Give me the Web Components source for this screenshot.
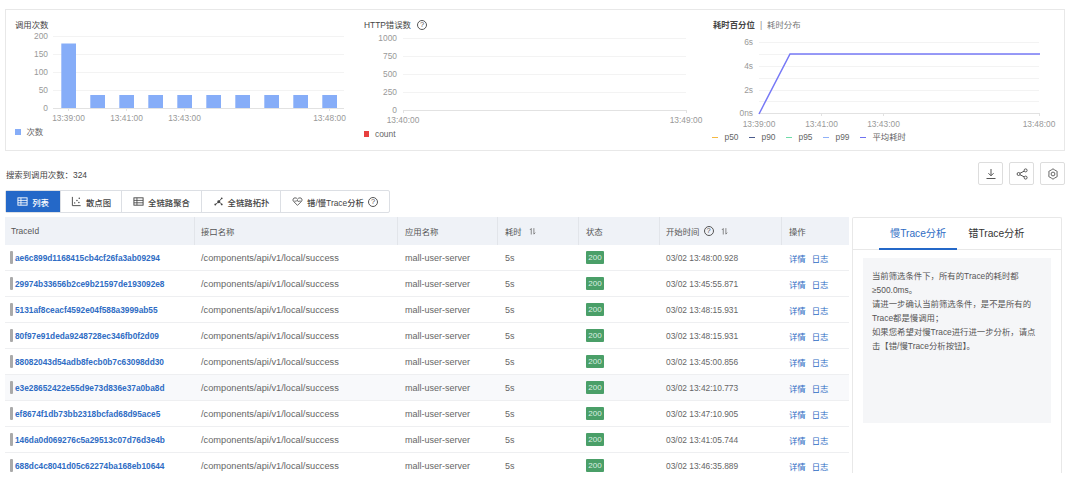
<!DOCTYPE html>
<html lang="zh">
<head>
<meta charset="utf-8">
<title>Trace</title>
<style>
  html, body { margin: 0; height: 483px; overflow: hidden; background: #fff; }
  body { font-family: "Liberation Sans", "Noto Sans CJK SC", sans-serif; font-size: 8.4px; color: #555; }
</style>
</head>
<body>
<trace-page></trace-page>

<script>
const ICONS = {
  table: `<rect x="1" y="2" width="10" height="8" fill="none" stroke="currentColor"/><path d="M1 4.8h10M1 7.4h10M4.3 2v8" stroke="currentColor" fill="none" stroke-width=".9"/>`,
  scatter: `<path d="M1.5 1v9.5h9" stroke="currentColor" fill="none"/><circle cx="4" cy="7.5" r=".8" fill="currentColor"/><circle cx="6.5" cy="5" r=".8" fill="currentColor"/><circle cx="9" cy="2.5" r=".8" fill="currentColor"/><circle cx="8.6" cy="7" r=".8" fill="currentColor"/>`,
  topo: `<path d="M2.5 9.5 6.5 6 9.5 2.5M6.5 6 9.5 9" stroke="currentColor" fill="none"/><circle cx="6.3" cy="6.2" r="1.6" fill="currentColor"/><circle cx="2.5" cy="9.3" r="1" fill="currentColor"/><circle cx="9.5" cy="2.5" r="1" fill="currentColor"/><circle cx="9.5" cy="9.2" r="1" fill="currentColor"/>`,
  heart: `<path d="M6 10.2 1.6 5.8C.4 4.4 1.2 2 3.3 2 4.6 2 5.4 2.7 6 3.5 6.6 2.7 7.4 2 8.7 2c2.1 0 2.9 2.4 1.7 3.8Z" fill="none" stroke="currentColor" stroke-width=".9"/><path d="M2.5 5.6h2.4l1-1.2 1 2 .8-.8h2" fill="none" stroke="currentColor" stroke-width=".8"/>`,
  download: `<path d="M6 1v6.6M3.4 5.2 6 7.8l2.6-2.6M1.5 10.5h9" fill="none" stroke="currentColor"/>`,
  share: `<circle cx="2.6" cy="6" r="1.5" fill="none" stroke="currentColor"/><circle cx="9.6" cy="2.4" r="1.5" fill="none" stroke="currentColor"/><circle cx="9.6" cy="9.6" r="1.5" fill="none" stroke="currentColor"/><path d="M3.9 5.3 8.3 3.1M3.9 6.7l4.4 2.2" fill="none" stroke="currentColor"/>`,
  gear: `<path d="M6 .8 7.6 1.9 10.2 3.4 10 5 10.2 8.6 7.6 10.1 6 11.2 4.4 10.1 1.8 8.6 2 5 1.8 3.4 4.4 1.9Z" fill="none" stroke="currentColor" stroke-width=".9" stroke-linejoin="round"/><circle cx="6" cy="6" r="1.9" fill="none" stroke="currentColor" stroke-width=".9"/>`,
  sort: `<path d="M3 10V2L1.2 4M6.5 1.5v8l1.8-2" fill="none" stroke="currentColor" stroke-width=".9"/>`
};

class UiIcon extends HTMLElement {
  connectedCallback() {
    const size = this.getAttribute("size") || 11;
    this.attachShadow({ mode: "open" }).innerHTML = `
    <style>:host { display: inline-flex; flex: none; } svg { display: block; }</style>
    <svg width="${size}" height="${size}" viewBox="0 0 12 12">${ICONS[this.getAttribute("name")]}</svg>`;
  }
}

class HelpMark extends HTMLElement {
  constructor() {
    super();
    this.attachShadow({ mode: "open" }).innerHTML = `
    <style>
      :host {
        display: inline-flex;
        flex: none;
        align-items: center;
        justify-content: center;
        box-sizing: border-box;
        width: 10px;
        height: 10px;
        border: 1px solid #555;
        border-radius: 50%;
        font-size: 7.5px;
        font-weight: 400;
        line-height: 1;
        color: #555;
      }
    </style>?`;
  }
}

class ChartPanel extends HTMLElement {
  constructor() {
    super();
    this.attachShadow({ mode: "open" }).innerHTML = `
    <style>
      :host { display: block; min-width: 0; padding-top: 9px; }
      .title {
        display: flex;
        align-items: center;
        height: 12px;
        line-height: 12px;
        color: #444;
        white-space: nowrap;
      }
      svg { display: block; }
      text { font-family: "Liberation Sans", sans-serif; font-size: 8.4px; fill: #999; }
      .legend {
        display: flex;
        height: 12px;
        line-height: 12px;
        color: #666;
        white-space: nowrap;
      }
    </style>
    <div class="title"><slot name="title"></slot></div>
    <div class="plot"></div>
    <div class="legend"><slot name="legend"></slot></div>`;
  }

  // the plot is drawn in page coordinates, viewBox maps them to this panel
  draw(x0, width, height, body) {
    this.shadowRoot.querySelector(".plot").innerHTML =
      `<svg width="${width}" height="${height}" viewBox="${x0} 31 ${width} ${height}">${body}</svg>`;
  }

  axes({ left, right, rows, labels, labelRight, axisY, ticks, tickY }) {
    let out = "";
    rows.forEach(([y, label]) => {
      if (y !== axisY) out += `<path d="M${left} ${y}.5H${right}" stroke="#f3f3f3"/>`;
      if (label) out += `<text x="${labelRight}" y="${y + 3}" text-anchor="end">${label}</text>`;
    });
    out += `<path d="M${left} ${axisY}.5H${right}" stroke="#e2e2e2"/>`;
    ticks.forEach((x) => { out += `<path d="M${x}.5 ${axisY}v3" stroke="#e2e2e2"/>`; });
    labels.forEach(([x, t]) => { out += `<text x="${x}" y="${tickY}" text-anchor="middle">${t}</text>`; });
    return out;
  }
}

class CallsChart extends ChartPanel {
  connectedCallback() {
    let body = this.axes({
      left: 53, right: 344, labelRight: 48, axisY: 108, tickY: 121,
      rows: [[36, "200"], [54, "150"], [72, "100"], [90, "50"], [108, "0"]],
      ticks: [68, 126, 184, 329],
      labels: [[68.5, "13:39:00"], [126.5, "13:41:00"], [184.5, "13:43:00"], [329.5, "13:48:00"]]
    });
    for (let i = 0; i < 10; i++) {
      const y = i === 0 ? 43.5 : 95;
      body = `${body}<rect x="${61.3 + i * 29}" y="${y}" width="14.7" height="${108 - y}" fill="#86adf8"/>`;
    }
    this.draw(6, 349, 95, body);
  }
}

class ErrorsChart extends ChartPanel {
  connectedCallback() {
    this.draw(355, 350, 97, this.axes({
      left: 403, right: 686, labelRight: 397, axisY: 110, tickY: 123,
      rows: [[38, "1000"], [56, "750"], [74, "500"], [92, "250"], [110, "0"]],
      ticks: [403, 686],
      labels: [[403, "13:40:00"], [686, "13:49:00"]]
    }));
  }
}

class LatencyChart extends ChartPanel {
  connectedCallback() {
    const body = this.axes({
      left: 759, right: 1039, labelRight: 753, axisY: 113, tickY: 126.5,
      rows: [[42, "6s"], [54], [66, "4s"], [78], [90, "2s"], [101], [113, "0ns"]],
      ticks: [821, 883, 1039],
      labels: [[759, "13:39:00"], [821.5, "13:41:00"], [883.5, "13:43:00"], [1039, "13:48:00"]]
    }) + `<path d="M759 114 790 54H1040" fill="none" stroke="#7779f6" stroke-width="1.5"/>`;
    this.draw(705, 359, 100, body);
  }
}

class LegendItem extends HTMLElement {
  connectedCallback() {
    const color = this.getAttribute("color");
    const dash = this.hasAttribute("dash");
    this.attachShadow({ mode: "open" }).innerHTML = `
    <style>
      :host { display: inline-flex; flex: none; align-items: center; gap: ${dash ? 7 : 6}px; width: var(--item-width, auto); white-space: nowrap; }
      i { display: block; flex: none; background: ${color}; width: 5.5px; height: ${dash ? 1 : 5.5}px; }
    </style>
    <i></i><slot></slot>`;
  }
}

class ToolButton extends HTMLElement {
  connectedCallback() {
    this.attachShadow({ mode: "open" }).innerHTML = `
    <style>
      :host {
        display: flex;
        align-items: center;
        justify-content: center;
        box-sizing: border-box;
        width: 25px;
        height: 23px;
        border: 1px solid #ddd;
        border-radius: 2px;
        color: #555;
      }
    </style>
    <ui-icon name="${this.getAttribute("icon")}" size="12"></ui-icon>`;
  }
}

class ViewTab extends HTMLElement {
  connectedCallback() {
    const icon = this.getAttribute("icon");
    this.attachShadow({ mode: "open" }).innerHTML = `
    <style>
      :host {
        display: flex;
        align-items: center;
        justify-content: center;
        gap: 4px;
        box-sizing: border-box;
        height: 100%;
        color: #444;
        font-weight: 500;
        border-left: 1px solid #dcdfe4;
        white-space: nowrap;
      }
      :host([active]) { background: #2468c8; color: #fff; border-left: 0; }
      :host([first]) { border-left: 0; }
    </style>
    <ui-icon name="${icon}"></ui-icon><slot></slot>`;
  }
}

class TraceRow extends HTMLElement {
  connectedCallback() {
    this.attachShadow({ mode: "open" }).innerHTML = `
    <style>
      :host {
        display: grid;
        grid-template-columns: 190px 203px 100px 81px 81px 122px 67px;
        align-items: center;
        box-sizing: border-box;
        height: 26px;
        border-bottom: 1px solid #eeeff1;
        color: #666;
        white-space: nowrap;
      }
      :host([hot]) { background: #f8f9fb; }
      .id { display: flex; align-items: center; gap: 2.5px; padding-left: 5px; font-size: 8.3px; font-weight: 700; color: #2e6cc4; }
      .id i { display: block; width: 2.5px; height: 13px; background: #aaa; border-radius: 1px; }
      .path { padding-left: 6px; font-size: 9.25px; }
      .cell { padding-left: 7px; }
      .app { font-size: 9px; }
      .dur { font-size: 9px; }
      .tag {
        display: block;
        width: 18px;
        height: 13px;
        line-height: 13px;
        margin-left: 7px;
        border-radius: 1px;
        background: #4a9f68;
        color: #dcefe2;
        font-size: 8px;
        text-align: center;
      }
      .time { padding-left: 6px; }
      .ops { display: flex; gap: 6px; padding-left: 7px; color: #2e6cc4; }
    </style>
    <div class="id"><i></i>${this.getAttribute("trace")}</div>
    <div class="path">/components/api/v1/local/success</div>
    <div class="cell app">mall-user-server</div>
    <div class="cell dur">5s</div>
    <div><span class="tag">200</span></div>
    <div class="time">${this.getAttribute("time")}</div>
    <div class="ops"><span>详情</span><span>日志</span></div>`;
  }
}

class TraceTable extends HTMLElement {
  connectedCallback() {
    const rows = [
      ["ae6c899d1168415cb4cf26fa3ab09294", "03/02 13:48:00.928"],
      ["29974b33656b2ce9b21597de193092e8", "03/02 13:45:55.871"],
      ["5131af8ceacf4592e04f588a3999ab55", "03/02 13:48:15.931"],
      ["80f97e91deda9248728ec346fb0f2d09", "03/02 13:48:15.931"],
      ["88082043d54adb8fecb0b7c63098dd30", "03/02 13:45:00.856"],
      ["e3e28652422e55d9e73d836e37a0ba8d", "03/02 13:42:10.773"],
      ["ef8674f1db73bb2318bcfad68d95ace5", "03/02 13:47:10.905"],
      ["146da0d069276c5a29513c07d76d3e4b", "03/02 13:41:05.744"],
      ["688dc4c8041d05c62274ba168eb10644", "03/02 13:46:35.889"]
    ];
    this.attachShadow({ mode: "open" }).innerHTML = `
    <style>
      :host { display: block; width: 844px; height: 100%; overflow: hidden; }
      .head {
        display: grid;
        grid-template-columns: 190px 203px 100px 81px 81px 122px 67px;
        height: 28px;
        background: #eff2f7;
        color: #555;
        white-space: nowrap;
      }
      .head div {
        display: flex;
        align-items: center;
        gap: 4px;
        padding-left: 6px;
        border-right: 1px solid #e2e5ea;
      }
      .head div:last-child { border-right: 0; }
      .head ui-icon { margin-left: 3px; }
      .head .wide { padding-left: 7px; }
    </style>
    <div class="head">
      <div>TraceId</div>
      <div>接口名称</div>
      <div class="wide">应用名称</div>
      <div class="wide">耗时<ui-icon name="sort" size="9"></ui-icon></div>
      <div class="wide">状态</div>
      <div>开始时间<help-mark></help-mark><ui-icon name="sort" size="9"></ui-icon></div>
      <div class="wide">操作</div>
    </div>
    ${rows.map((r, i) => `<trace-row trace="${r[0]}" time="${r[1]}"${i === 5 ? " hot" : ""}></trace-row>`).join("")}`;
  }
}

class AnalysisPanel extends HTMLElement {
  connectedCallback() {
    this.attachShadow({ mode: "open" }).innerHTML = `
    <style>
      :host {
        display: block;
        box-sizing: border-box;
        width: 210px;
        height: 100%;
        margin-left: 3px;
        border: 1px solid #e8e8e8;
        border-bottom: 0;
        border-radius: 2px 2px 0 0;
      }
      .tabs {
        display: flex;
        box-sizing: border-box;
        height: 32px;
        padding-left: 26px;
        border-bottom: 1px solid #e8e8e8;
        font-size: 10.2px;
        color: #333;
      }
      .tabs div { padding: 0 11px; line-height: 31px; white-space: nowrap; }
      .tabs .on { height: 32px; box-sizing: border-box; border-bottom: 2px solid #2468c8; color: #2e6cc4; }
      .note {
        box-sizing: border-box;
        height: 165px;
        margin: 8px 10px 0;
        padding: 11px 9px;
        background: #f5f6f8;
        line-height: 14px;
        color: #555;
        white-space: nowrap;
      }
    </style>
    <div class="tabs"><div class="on">慢Trace分析</div><div>错Trace分析</div></div>
    <div class="note">当前筛选条件下，所有的Trace的耗时都<br>≥500.0ms。<br>请进一步确认当前筛选条件，是不是所有的<br>Trace都是慢调用；<br>如果您希望对慢Trace进行进一步分析，请点<br>击【错/慢Trace分析按钮】。</div>`;
  }
}

class TracePage extends HTMLElement {
  constructor() {
    super();
    this.attachShadow({ mode: "open" }).innerHTML = `
    <style>
      :host { display: block; box-sizing: border-box; width: 1080px; height: 483px; padding: 9px 15px 0 5px; }
      .charts {
        display: grid;
        grid-template-columns: 349px 350px 359px;
        box-sizing: border-box;
        height: 142px;
        border: 1px solid #e8e8e8;
      }
      .t1 { padding-left: 9px; }
      .t2 { display: flex; align-items: center; gap: 6px; padding-left: 9px; }
      .t3 { display: flex; align-items: center; gap: 5px; padding-left: 8px; }
      .bar { display: flex; align-items: center; justify-content: space-between; height: 23px; margin-top: 11px; padding-left: 1px; color: #444; }
      .tools { display: flex; gap: 6px; }
      .views {
        display: grid;
        grid-template-columns: 54px 61px 80px 79px 109px;
        box-sizing: border-box;
        width: 385px;
        height: 23px;
        margin-top: 5px;
        border: 1px solid #dcdfe4;
        border-radius: 2px;
      }
      .main { display: flex; height: 256px; margin-top: 4px; }
      .lg { display: flex; padding-left: 9px; }
      .lg2 { display: flex; padding-left: 8.5px; }
      .lg3 { display: flex; padding-left: 7px; --item-width: 37px; }
      .head3 { font-weight: 700; color: #444; }
      .sep { color: #888; }
      .sub { color: #777; }
    </style>
    <div class="charts">
      <calls-chart>
        <span slot="title" class="t1">调用次数</span>
        <span slot="legend" class="lg"><legend-item color="#86adf8">次数</legend-item></span>
      </calls-chart>
      <errors-chart>
        <span slot="title" class="t2">HTTP错误数<help-mark></help-mark></span>
        <span slot="legend" class="lg2"><legend-item color="#e8403f">count</legend-item></span>
      </errors-chart>
      <latency-chart>
        <span slot="title" class="t3"><span class="head3">耗时百分位</span><span class="sep">|</span><span class="sub">耗时分布</span></span>
        <span slot="legend" class="lg3">
          <legend-item dash color="#f5b942">p50</legend-item>
          <legend-item dash color="#4a5b8c">p90</legend-item>
          <legend-item dash color="#6fdca8">p95</legend-item>
          <legend-item dash color="#8fb0f8">p99</legend-item>
          <legend-item dash color="#6f72f0">平均耗时</legend-item>
        </span>
      </latency-chart>
    </div>
    <div class="bar">
      <span>搜索到调用次数：324</span>
      <div class="tools">
        <tool-button icon="download"></tool-button>
        <tool-button icon="share"></tool-button>
        <tool-button icon="gear"></tool-button>
      </div>
    </div>
    <div class="views">
      <view-tab icon="table" active first>列表</view-tab>
      <view-tab icon="scatter">散点图</view-tab>
      <view-tab icon="table">全链路聚合</view-tab>
      <view-tab icon="topo">全链路拓扑</view-tab>
      <view-tab icon="heart">错/慢Trace分析<help-mark></help-mark></view-tab>
    </div>
    <div class="main">
      <trace-table></trace-table>
      <analysis-panel></analysis-panel>
    </div>`;
  }
}

customElements.define("ui-icon", UiIcon);
customElements.define("help-mark", HelpMark);
customElements.define("calls-chart", CallsChart);
customElements.define("errors-chart", ErrorsChart);
customElements.define("latency-chart", LatencyChart);
customElements.define("legend-item", LegendItem);
customElements.define("tool-button", ToolButton);
customElements.define("view-tab", ViewTab);
customElements.define("trace-row", TraceRow);
customElements.define("trace-table", TraceTable);
customElements.define("analysis-panel", AnalysisPanel);
customElements.define("trace-page", TracePage);
</script>
</body>
</html>
